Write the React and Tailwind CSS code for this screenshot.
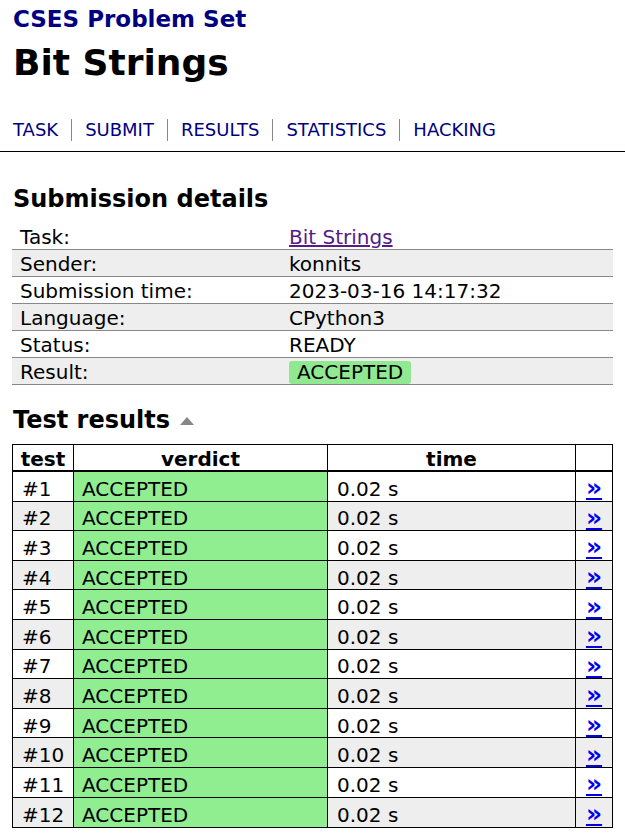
const details = [
  ['Task:', 'link'],
  ['Sender:', 'konnits'],
  ['Submission time:', '2023-03-16 14:17:32'],
  ['Language:', 'CPython3'],
  ['Status:', 'READY'],
  ['Result:', 'badge'],
];

const tests = Array.from({ length: 12 }, (_, i) => i + 1);

const nav = ['TASK', 'SUBMIT', 'RESULTS', 'STATISTICS', 'HACKING'];

export default function App() {
  return (
    <div className="min-h-[835px] bg-white text-black text-[20px]" style={{ fontFamily: '"DejaVu Sans", Verdana, sans-serif' }}>
      <div className="px-[13px] pt-[4px]">
        <div className="text-[23px] font-bold text-[#000080] leading-[30px]">CSES Problem Set</div>
        <h1 className="text-[36px] font-bold leading-[50px] mt-[4px]">Bit Strings</h1>
        <div className="flex items-center mt-[30px] text-[18px] text-[#000080] leading-[24px]">
          {nav.map((n, i) => (
            <div key={n} className="flex items-center">
              {i > 0 && <span className="mx-[13px] h-[22px] w-px bg-[#888888]" />}
              <span>{n}</span>
            </div>
          ))}
        </div>
      </div>
      <div className="mt-[9px] h-px bg-black" />

      <div className="px-[12px]">
        {/* Submission details */}
        <h2 className="mt-[30px] text-[24px] font-bold leading-[34px] pl-px">Submission details</h2>
        <div className="mt-[7px] w-[601px]">
          {details.map(([k, v], i) => (
            <div key={k} className={`flex items-center h-[27px] pt-[1px] border-b border-[#888888] ${i % 2 ? 'bg-[#eeeeee]' : 'bg-white'}`}>
              <div className="w-[277px] pl-[8px]">{k}</div>
              <div>
                {v === 'link' ? (
                  <a className="text-[#551a8b] underline" href="#">Bit Strings</a>
                ) : v === 'badge' ? (
                  <span className="inline-block bg-[#90e890] rounded-[3px] px-[8px] leading-[23px]">ACCEPTED</span>
                ) : (
                  v
                )}
              </div>
            </div>
          ))}
        </div>

        {/* Test results */}
        <h2 className="mt-[18px] text-[24px] font-bold leading-[34px] pl-px flex items-center">
          Test results
          <svg width="14" height="8" viewBox="0 0 14 8" className="ml-[10px] mt-[1px]">
            <polygon points="7,0 14,8 0,8" fill="#888888" />
          </svg>
        </h2>
        <div className="mt-[7px] w-[601px] border border-black">
          <div className="flex h-[27px] border-b-2 border-black font-bold leading-[22px] text-center">
            <div className="w-[60px] pt-[3px]">test</div>
            <div className="w-[254px] border-l border-black pt-[3px]">verdict</div>
            <div className="w-[248px] border-l border-black pt-[3px]">time</div>
            <div className="flex-1 border-l border-black" />
          </div>
          {tests.map((t) => (
            <div key={t} className={`flex h-[29.6px] items-stretch ${t < 12 ? 'border-b border-black' : ''} ${t % 2 === 0 ? 'bg-[#eeeeee]' : 'bg-white'}`}>
              <div className="w-[60px] pl-[9px] pt-[5px] flex items-center">#{t}</div>
              <div className="w-[254px] border-l border-black bg-[#90ee90] pl-[8px] pt-[5px] flex items-center">ACCEPTED</div>
              <div className="w-[248px] border-l border-black pl-[9px] pt-[5px] flex items-center">0.02 s</div>
              <div className="flex-1 border-l border-black flex items-center justify-center pt-[4px]">
                <a href="#" className="text-[#0000ee] underline font-bold text-[25px] leading-[20px]">&raquo;</a>
              </div>
            </div>
          ))}
        </div>
      </div>
    </div>
  );
}
